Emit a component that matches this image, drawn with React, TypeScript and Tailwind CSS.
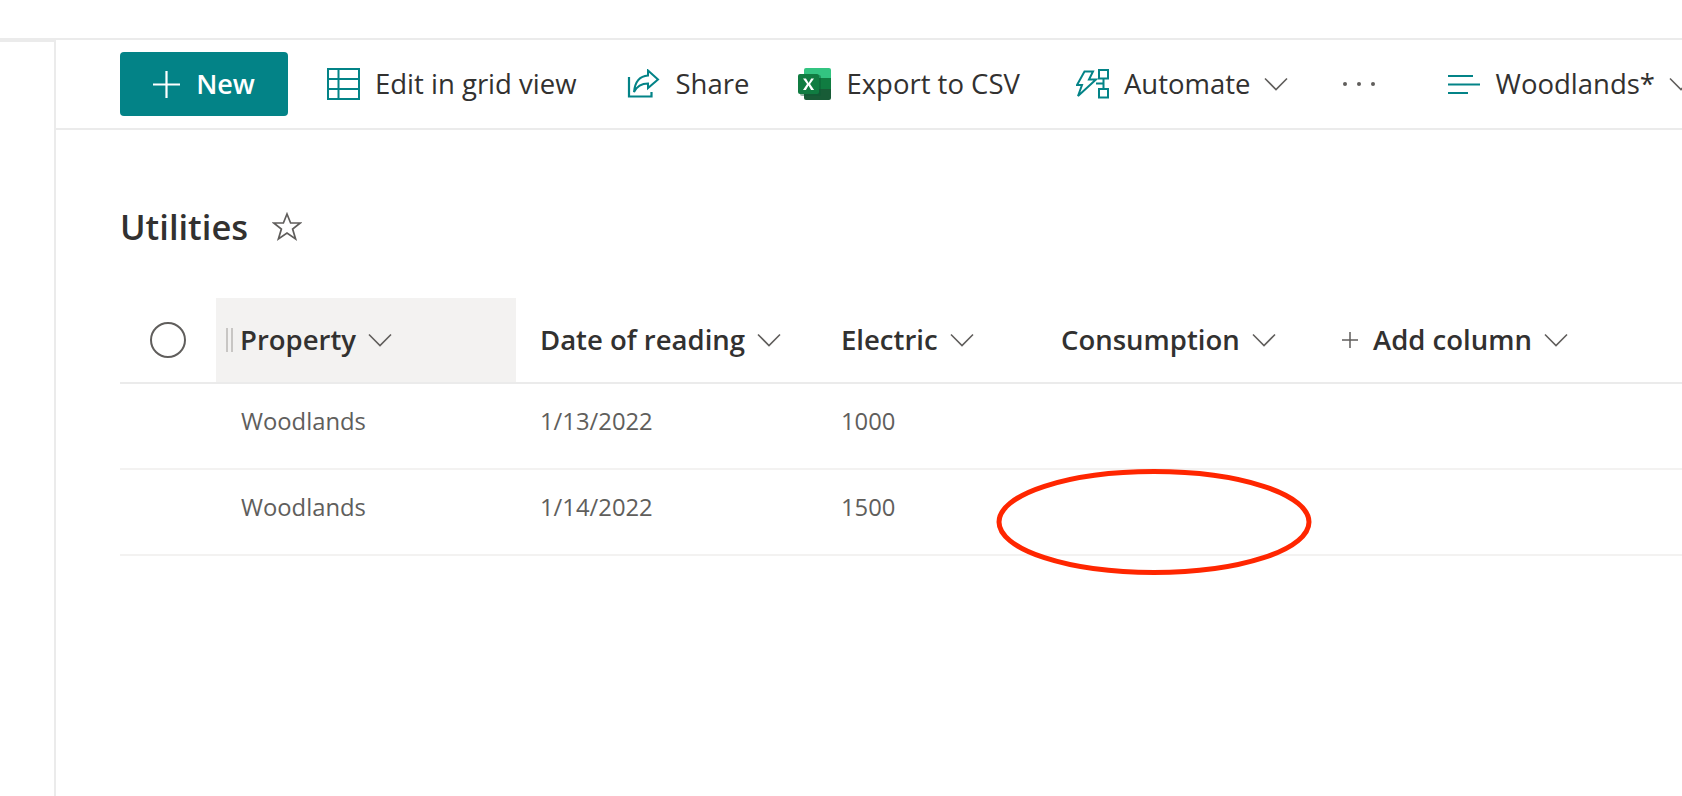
const font = "font-['Open_Sans','Liberation_Sans',sans-serif]";

function Chevron({ className = "" }: { className?: string }) {
  return (
    <svg width="24" height="14" viewBox="0 0 24 14" fill="none" stroke="#605e5c" strokeWidth="1.6" className={className}>
      <path d="M1 1.5 12 12.5 23 1.5" />
    </svg>
  );
}

function GridIcon() {
  return (
    <svg width="33" height="32" viewBox="0 0 33 32" fill="none" stroke="#038387" strokeWidth="2">
      <rect x="1" y="1" width="31" height="30" />
      <path d="M1 11h31M1 21h31M11.5 1v30" />
    </svg>
  );
}

function ShareIcon() {
  return (
    <svg width="33" height="30" viewBox="0 0 33 30" fill="none" stroke="#038387" strokeWidth="2.2">
      <path d="M2 8v19.5h22.5V23" />
      <path d="M21 1.5 31 10.5 21 19V14.5C14 14.5 10 17 7 23 8 13 13 7 21 6.5Z" strokeWidth="2" />
    </svg>
  );
}

function ExcelIcon() {
  return (
    <svg width="33" height="32" viewBox="0 0 33 32">
      <path d="M8 0h23a2 2 0 0 1 2 2v8H6V2a2 2 0 0 1 2-2z" fill="#33c481" />
      <rect x="6" y="10" width="14" height="11" fill="#21a366" />
      <rect x="20" y="10" width="13" height="11" fill="#107c41" />
      <path d="M6 21h27v9a2 2 0 0 1-2 2H8a2 2 0 0 1-2-2z" fill="#185c37" />
      <rect x="2" y="7" width="21" height="21" rx="2" fill="#0b5a32" opacity="0.45" />
      <rect x="0" y="6" width="21" height="20" rx="2" fill="#107c41" />
      <path d="M5 10.5h3l2.6 4.4 2.6-4.4h2.8l-3.9 5.6 4 5.9h-3l-2.6-4.5L7.9 22H5l4-5.9z" fill="#fff" />
    </svg>
  );
}

function AutomateIcon() {
  return (
    <svg width="33" height="30" viewBox="0 0 33 30" fill="none" stroke="#038387" strokeWidth="2">
      <path d="M8.5 2.5H17L13 10.5H20L2 27 6 16H1Z" />
      <rect x="23" y="1" width="9" height="8.5" />
      <rect x="23" y="20" width="9" height="8.5" />
      <path d="M27.5 9.5V20M20 14.5H27.5" />
    </svg>
  );
}

function FilterIcon() {
  return (
    <svg width="32" height="19" viewBox="0 0 32 19" fill="none" stroke="#038387" strokeWidth="2">
      <path d="M0 1h25M0 9.5h32M0 18h20" />
    </svg>
  );
}

function ToolbarItem({ icon, label, className = "", chevron = false }: { icon: React.ReactNode; label: string; className?: string; chevron?: boolean }) {
  return (
    <div className={`flex shrink-0 items-center ${className}`}>
      <div className="flex w-[33px] justify-center">{icon}</div>
      <span className="ml-[15px] whitespace-nowrap text-[27.5px] text-[#323130]">{label}</span>
      {chevron && <Chevron className="ml-[14px]" />}
    </div>
  );
}

function HeaderCell({ label, className = "" }: { label: string; className?: string }) {
  return (
    <div className={`flex shrink-0 items-center ${className}`}>
      <span className="whitespace-nowrap text-[27.5px] font-semibold text-[#323130]">{label}</span>
      <Chevron className="ml-3" />
    </div>
  );
}

const rows = [
  { property: "Woodlands", date: "1/13/2022", electric: "1000" },
  { property: "Woodlands", date: "1/14/2022", electric: "1500" },
];

export default function App() {
  return (
    <div className={`relative h-[796px] w-full overflow-hidden bg-white ${font}`}>
      <div className="h-[38px]" />
      <div className="flex h-[758px]">
        {/* left rail */}
        <div className="w-[54px] shrink-0 border-t-4 border-[#ebebeb]" />

        <div className="min-w-0 flex-1 border-l-2 border-t-2 border-[#ebebeb]">
          {/* command bar */}
          <div className="flex h-[90px] items-center border-b-2 border-[#ebebeb] pl-[64px]">
            <div className="flex h-16 w-[168px] shrink-0 items-center justify-center rounded-[4px] bg-[#038387] text-white">
              <svg width="27" height="27" viewBox="0 0 27 27" stroke="#fff" strokeWidth="2.2">
                <path d="M13.5 0v27M0 13.5h27" />
              </svg>
              <span className="ml-[16px] text-[27px] font-semibold">New</span>
            </div>
            <ToolbarItem icon={<GridIcon />} label="Edit in grid view" className="ml-[39px]" />
            <ToolbarItem icon={<ShareIcon />} label="Share" className="ml-[51px]" />
            <ToolbarItem icon={<ExcelIcon />} label="Export to CSV" className="ml-[49px]" />
            <ToolbarItem icon={<AutomateIcon />} label="Automate" className="ml-[56px]" chevron />
            <div className="ml-[55px] flex w-[32px] shrink-0 justify-between">
              <span className="size-[4px] rounded-full bg-[#605e5c]" />
              <span className="size-[4px] rounded-full bg-[#605e5c]" />
              <span className="size-[4px] rounded-full bg-[#605e5c]" />
            </div>
            <ToolbarItem icon={<FilterIcon />} label="Woodlands*" className="ml-[72px]" chevron />
          </div>

          <div className="pl-[64px]">
            {/* title */}
            <div className="mt-[72px] flex h-[50px] items-center">
              <h1 className="text-[34.5px] font-semibold text-[#323130]">Utilities</h1>
              <svg width="30" height="30" viewBox="0 0 30 30" fill="none" stroke="#605e5c" strokeWidth="1.7" className="ml-[24px]">
                <path d="M15 2l3.6 9h9.6l-7.6 6 3 10L15 21l-8.6 6 3-10-7.6-6h9.6z" />
              </svg>
            </div>

            {/* list header */}
            <div className="mt-[46px] flex h-[86px] items-stretch border-b-2 border-[#ebebeb]">
              <div className="flex w-[96px] shrink-0 items-center pl-[30px]">
                <div className="size-[36px] rounded-full border-2 border-[#605e5c]" />
              </div>
              <div className="flex w-[300px] shrink-0 items-center bg-[#f3f2f1] pl-[10px]">
                <div className="mr-[7px] h-[24px] w-[7px] shrink-0 border-x-2 border-[#c8c6c4]" />
                <span className="text-[27.5px] font-semibold text-[#323130]">Property</span>
                <Chevron className="ml-3" />
              </div>
              <HeaderCell label="Date of reading" className="w-[325px] pl-[24px]" />
              <HeaderCell label="Electric" className="w-[220px]" />
              <HeaderCell label="Consumption" className="w-[281px]" />
              <div className="flex shrink-0 items-center">
                <svg width="16" height="16" viewBox="0 0 16 16" stroke="#605e5c" strokeWidth="1.5" className="mr-[15px]">
                  <path d="M8 0v16M0 8h16" />
                </svg>
                <HeaderCell label="Add column" />
              </div>
            </div>

            {/* rows */}
            {rows.map((row) => (
              <div key={row.date} className="flex h-[86px] items-center border-b-2 border-[#f3f2f1] pb-2 text-[23.8px] text-[#605e5c]">
                <div className="ml-[96px] w-[300px] shrink-0 pl-[25px]">{row.property}</div>
                <div className="w-[325px] shrink-0 pl-[24px]">{row.date}</div>
                <div>{row.electric}</div>
              </div>
            ))}
          </div>
        </div>
      </div>

      {/* red hand-drawn annotation */}
      <svg width="320" height="112" viewBox="0 0 320 112" fill="none" className="absolute left-[995px] top-[466px]">
        <ellipse cx="159" cy="56" rx="155" ry="50.5" stroke="#ff2600" strokeWidth="5" />
      </svg>
    </div>
  );
}
